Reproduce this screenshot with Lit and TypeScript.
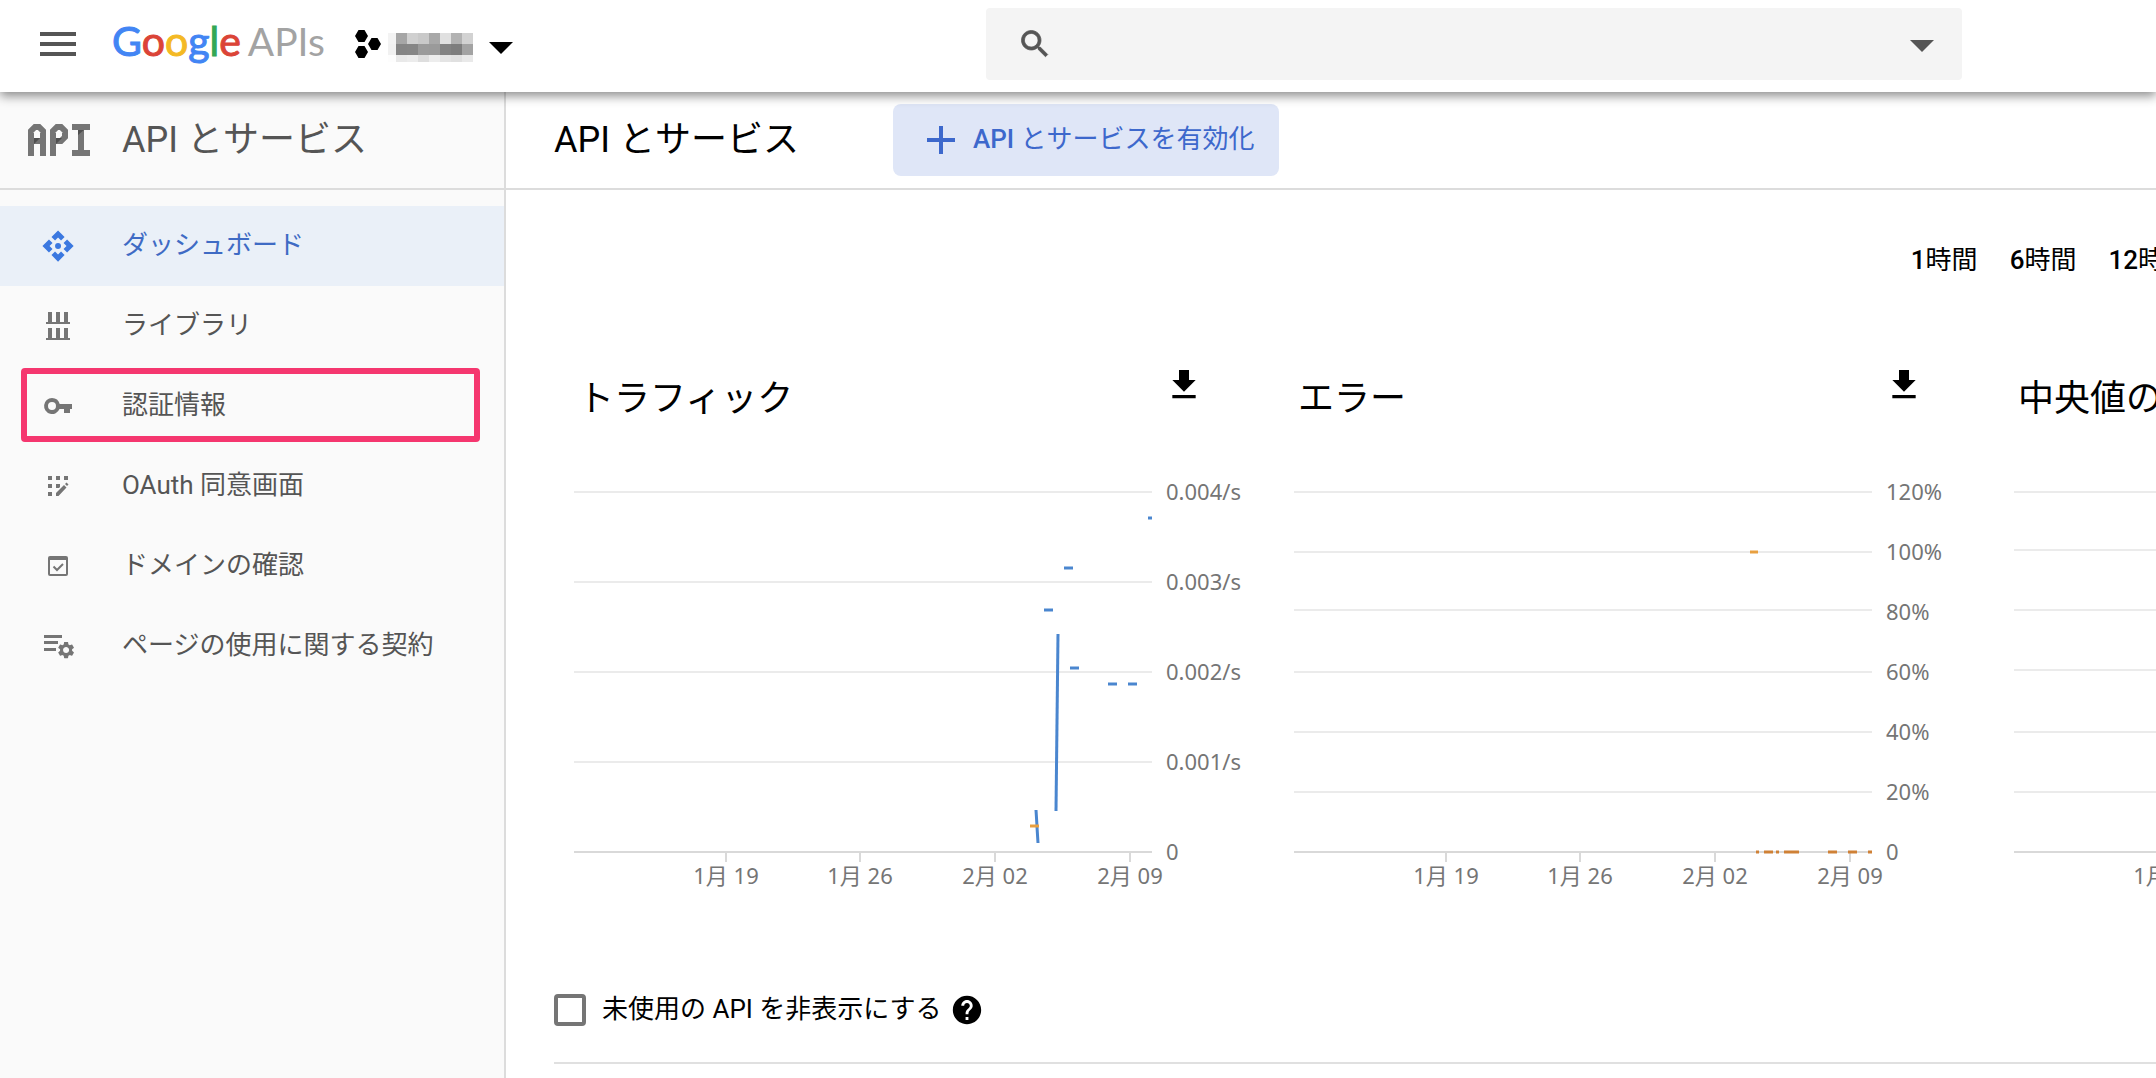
import { LitElement, html, svg, css, nothing, type TemplateResult } from "lit";
import { customElement, property } from "lit/decorators.js";

type Segment = { x1: number; y1: number; x2: number; y2: number; color: string };
type Metric = {
  title: string;
  lines: number[];
  labels: { y: number; text: string }[];
  segments: Segment[];
};

const BLUE = "#4a86cf";
const AMBER = "#e8a040";
const OCHRE = "#cf8136";
const PLOT_WIDTH = 578;
const AXIS_Y = 372;

const dash = (x1: number, x2: number, y: number, color: string): Segment => ({ x1, y1: y, x2, y2: y, color });

const METRICS: Metric[] = [
  {
    title: "トラフィック",
    lines: [12, 102, 192, 282],
    labels: [
      { y: 12, text: "0.004/s" },
      { y: 102, text: "0.003/s" },
      { y: 192, text: "0.002/s" },
      { y: 282, text: "0.001/s" },
      { y: 372, text: "0" },
    ],
    segments: [
      dash(574, 578, 38, BLUE),
      dash(490, 499, 88, BLUE),
      dash(470, 479, 130, BLUE),
      { x1: 484, y1: 154, x2: 482, y2: 331, color: BLUE },
      dash(496, 505, 188, BLUE),
      dash(534, 543, 204, BLUE),
      dash(554, 563, 204, BLUE),
      { x1: 462, y1: 330, x2: 464, y2: 363, color: BLUE },
      dash(456, 465, 346, AMBER),
    ],
  },
  {
    title: "エラー",
    lines: [12, 72, 130, 192, 252, 312],
    labels: [
      { y: 12, text: "120%" },
      { y: 72, text: "100%" },
      { y: 132, text: "80%" },
      { y: 192, text: "60%" },
      { y: 252, text: "40%" },
      { y: 312, text: "20%" },
      { y: 372, text: "0" },
    ],
    segments: [
      dash(456, 464, 72, AMBER),
      dash(462, 465, 372, OCHRE),
      dash(470, 479, 372, OCHRE),
      dash(482, 485, 372, OCHRE),
      dash(490, 505, 372, OCHRE),
      dash(534, 543, 372, OCHRE),
      dash(554, 563, 372, OCHRE),
      dash(574, 578, 372, OCHRE),
    ],
  },
  {
    title: "中央値のレイテンシ",
    lines: [12, 70, 130, 190, 252, 312],
    labels: [],
    segments: [],
  },
];

const DATES = [
  { x: 152, text: "1月 19" },
  { x: 286, text: "1月 26" },
  { x: 421, text: "2月 02" },
  { x: 556, text: "2月 09" },
];

@customElement("metric-chart")
class MetricChart extends LitElement {
  @property({ attribute: false }) metric!: Metric;

  static styles = css`
    :host {
      display: block;
      flex: 0 0 720px;
    }
    .head {
      display: flex;
      align-items: flex-start;
      justify-content: space-between;
      width: 630px;
      height: 115px;
      padding-left: 4px;
      box-sizing: border-box;
    }
    .title {
      margin: 14px 0 0;
      font-size: 36px;
      font-weight: 400;
      line-height: 40px;
      white-space: nowrap;
    }
    .download {
      display: block;
      padding: 0;
      border: 0;
      background: none;
      color: #000;
    }
    .download svg,
    .plot {
      display: block;
    }
    .plot {
      overflow: visible;
    }
    .tick-label {
      font-family: "Noto Sans", "Noto Sans CJK JP", sans-serif;
      font-size: 22px;
      fill: #757575;
    }
    .grid {
      stroke: #ebebeb;
      stroke-width: 2;
    }
    .axis {
      stroke: #d9d9d9;
      stroke-width: 2;
    }
    .series {
      stroke-width: 3;
    }
  `;

  render() {
    const m = this.metric;
    return html`
      <div class="head">
        <h2 class="title">${m.title}</h2>
        <button class="download" type="button" aria-label="${m.title}をダウンロード">
          <svg width="40" height="40" viewBox="0 0 24 24" fill="currentColor" aria-hidden="true">
            <path d="M19 9h-4V3H9v6H5l7 7 7-7zM5 18v2h14v-2H5z" />
          </svg>
        </button>
      </div>
      <svg class="plot" width="700" height="410" viewBox="0 0 700 410" role="img" aria-label=${m.title}>
        ${m.lines.map((y) => svg`<line class="grid" x1="0" x2=${PLOT_WIDTH} y1=${y} y2=${y} />`)}
        <line class="axis" x1="0" x2=${PLOT_WIDTH} y1=${AXIS_Y} y2=${AXIS_Y} />
        ${DATES.map(
          (d) => svg`
            <line class="axis" x1=${d.x} x2=${d.x} y1=${AXIS_Y} y2=${AXIS_Y + 10} />
            <text class="tick-label" x=${d.x} y="404" text-anchor="middle">${d.text}</text>`,
        )}
        ${m.labels.map((l) => svg`<text class="tick-label" x="592" y=${l.y + 8}>${l.text}</text>`)}
        ${m.segments.map(
          (s) => svg`<line class="series" x1=${s.x1} y1=${s.y1} x2=${s.x2} y2=${s.y2} stroke=${s.color} />`,
        )}
      </svg>
    `;
  }
}

const navIcons: Record<string, TemplateResult> = {
  dashboard: svg`<g transform="translate(1 1) scale(1.42)"><path d="M12 6l2.12 2.12 2.5-2.5L12 1 7.38 5.62l2.5 2.5L12 6zm-6 6l2.12-2.12-2.5-2.5L1 12l4.62 4.62 2.5-2.5L6 12zm12 0l-2.12 2.12 2.5 2.5L23 12l-4.62-4.62-2.5 2.5L18 12zm-6 6l-2.12-2.12-2.5 2.5L12 23l4.62-4.62-2.5-2.5L12 18z"/><circle cx="12" cy="12" r="2.1"/></g>`,
  library: svg`<path d="M8 4h4v10h4V4h4v10h4V4h4v10h2v2H6v-2h2zM8 20h4v10h4V20h4v10h4V20h4v10h2v2H6v-2h2z"/>`,
  key: svg`<path fill-rule="evenodd" d="M12 10a8 8 0 0 1 7.7 6H32v5h-2v4h-6v-4h-4.500a8 8 0 1 1-7.500-11zm0 4a4 4 0 1 0 0 8 4 4 0 0 0 0-8z"/>`,
  consent: svg`<path d="M8 8h4v4H8zM16 8h4v4h-4zM24 8h4v4h-4zM8 16h4v4H8zM16 16h4v3l-1 1h-3zM8 24h4v4H8zM16 28v-3l8-8 2.500 2.500L18.500 28zM25 16l1.500-1.500 2 2L27 18z"/>`,
  domain: svg`<path fill-rule="evenodd" d="M10 8h16a2 2 0 0 1 2 2v16a2 2 0 0 1-2 2H10a2 2 0 0 1-2-2V10a2 2 0 0 1 2-2zm0 4v14h16V12z"/><path d="M13.500 18.500l3.500 3.500 6-6" fill="none" stroke="currentColor" stroke-width="2"/>`,
  terms: svg`<path d="M4 7h18v3H4zM4 13h14v3H4zM4 20h12v3H4z"/><g transform="translate(16 12) scale(.84)"><path d="M19.140 12.940c.04-.3.06-.61.06-.94 0-.32-.02-.64-.07-.94l2.030-1.580c.18-.14.23-.41.12-.61l-1.920-3.320c-.12-.22-.37-.29-.59-.22l-2.390.96c-.5-.38-1.030-.7-1.620-.94l-.36-2.540c-.04-.24-.24-.41-.48-.41h-3.840c-.24 0-.43.17-.47.41l-.36 2.540c-.59.24-1.130.57-1.620.94l-2.390-.96c-.22-.08-.47 0-.59.22L2.740 8.870c-.12.21-.08.47.12.61l2.030 1.580c-.05.3-.09.63-.09.94s.02.64.07.94l-2.030 1.580c-.18.14-.23.41-.12.61l1.920 3.320c.12.22.37.29.59.22l2.390-.96c.5.38 1.030.7 1.620.94l.36 2.540c.05.24.24.41.48.41h3.840c.24 0 .44-.17.47-.41l.36-2.540c.59-.24 1.130-.56 1.620-.94l2.390.96c.22.08.47 0 .59-.22l1.920-3.320c.12-.22.07-.47-.12-.61l-2.010-1.580zM12 15.600c-1.980 0-3.600-1.620-3.600-3.600s1.620-3.600 3.600-3.600 3.600 1.620 3.600 3.600-1.620 3.600-3.600 3.600z"/></g>`,
};

const NAV = [
  { icon: "dashboard", label: "ダッシュボード", current: true },
  { icon: "library", label: "ライブラリ" },
  { icon: "key", label: "認証情報", marked: true },
  { icon: "consent", label: "OAuth 同意画面" },
  { icon: "domain", label: "ドメインの確認" },
  { icon: "terms", label: "ページの使用に関する契約" },
];

const RANGES = ["1", "6", "12"];

const LOGO = [
  ["G", "#4285f4"],
  ["o", "#db4437"],
  ["o", "#f4b924"],
  ["g", "#4285f4"],
  ["l", "#34a853"],
  ["e", "#db4437"],
];

/* Grey levels of the obscured project name, one row per line of blocks. */
const MOSAIC = [
  { height: 11, cells: ["#f3f3f3", "#a6a6a6", "#d0d0d0", "#c9c9c9", "#a8a8a8", "#e0e0e0", "#b2b2b2", "#d2d2d2"] },
  { height: 11, cells: ["#f1f1f1", "#858585", "#868686", "#9b9b9b", "#9a9a9a", "#828282", "#7d7d7d", "#a3a3a3"] },
  { height: 7, cells: ["#fdfdfd", "#e9e9e9", "#ececec", "#dedede", "#ededed", "#e4e4e4", "#e0e0e0", "#e9e9e9"] },
];

@customElement("app-root")
class AppRoot extends LitElement {
  static styles = css`
    :host {
      display: flex;
      flex-direction: column;
      min-height: 100vh;
      overflow: hidden;
      background: #fff;
      color: #000;
      font-family: Roboto, "Noto Sans CJK JP", sans-serif;
      font-size: 26px;
    }
    button,
    input {
      font: inherit;
      color: inherit;
    }
    button {
      padding: 0;
      border: 0;
      background: none;
    }
    svg {
      display: block;
      flex: none;
    }
    .topbar {
      position: relative;
      z-index: 1;
      display: flex;
      align-items: flex-start;
      height: 92px;
      padding-right: 194px;
      box-sizing: border-box;
      background: #fff;
      box-shadow: 0 4px 10px rgba(0, 0, 0, 0.45);
    }
    .brand {
      display: flex;
      align-items: center;
      flex: 0 0 986px;
      height: 88px;
      padding-left: 34px;
      box-sizing: border-box;
    }
    .menu {
      color: #555;
    }
    .logo {
      display: flex;
      align-items: baseline;
      gap: 7px;
      margin-left: 30px;
      padding-bottom: 6px;
      font-family: Lato, sans-serif;
      font-size: 41px;
      line-height: 48px;
      color: #a3a3a3;
      text-decoration: none;
    }
    .google {
      -webkit-text-stroke: 1px currentColor;
    }
    .product {
      font-size: 39px;
    }
    .project {
      display: flex;
      align-items: center;
      margin-left: 30px;
    }
    .mosaic {
      display: block;
      margin: 6px 16px 0 7px;
    }
    .mosaic-row {
      display: grid;
      grid-template-columns: 8px repeat(7, 11px);
    }
    .caret {
      margin-top: 8px;
    }
    .search {
      display: flex;
      align-items: center;
      flex: 1;
      height: 72px;
      margin-top: 8px;
      padding: 0 28px 0 31px;
      box-sizing: border-box;
      border-radius: 4px;
      background: #f4f4f4;
      color: #555;
    }
    .search-input {
      flex: 1;
      min-width: 0;
      height: 48px;
      padding: 0 16px;
      border: 0;
      outline: 0;
      background: none;
    }
    .suggest {
      padding-top: 4px;
    }
    .body {
      display: flex;
      flex: 1;
    }
    .sidebar {
      flex: 0 0 504px;
      border-right: 2px solid #dcdcdc;
      background: #fafafa;
      color: #555;
    }
    .section {
      display: flex;
      align-items: center;
      height: 96px;
      padding-left: 28px;
      border-bottom: 2px solid #dcdcdc;
    }
    .section-name {
      margin-left: 32px;
      font-size: 36px;
      line-height: 48px;
    }
    .nav {
      margin: 0;
      padding: 16px 0 0;
      list-style: none;
    }
    .nav-item {
      position: relative;
    }
    .nav-link {
      display: flex;
      align-items: center;
      gap: 46px;
      height: 80px;
      padding-left: 40px;
      color: #555;
      text-decoration: none;
      white-space: nowrap;
    }
    .nav-link svg {
      color: #757575;
    }
    .nav-text {
      padding-bottom: 2px;
      line-height: 40px;
    }
    .nav-link.current {
      background: #eaf0f8;
      color: #3f6bc4;
    }
    .nav-link.current svg {
      color: #3b78e0;
    }
    .marker {
      position: absolute;
      inset: 2px 24px 4px 21px;
      border: 6px solid #f5376f;
      border-radius: 4px;
      pointer-events: none;
    }
    .main {
      flex: 1;
      min-width: 0;
      overflow: hidden;
    }
    .page-head {
      display: flex;
      align-items: center;
      gap: 94px;
      height: 96px;
      padding-left: 48px;
      border-bottom: 2px solid #dcdcdc;
    }
    .page-title {
      margin: 0;
      font-size: 36px;
      font-weight: 400;
      line-height: 48px;
      white-space: nowrap;
    }
    .enable {
      display: flex;
      align-items: center;
      gap: 18px;
      height: 72px;
      padding: 0 24px 0 34px;
      border-radius: 8px;
      background: #dfe6f7;
      color: #3d68cc;
      white-space: nowrap;
    }
    .enable-text {
      padding-bottom: 2px;
      line-height: 40px;
    }
    .strong {
      font-weight: 500;
    }
    .ranges {
      display: flex;
      justify-content: flex-end;
      gap: 32px;
      margin-right: -34px;
      padding-top: 50px;
      white-space: nowrap;
    }
    .range {
      line-height: 40px;
    }
    .charts {
      display: flex;
      margin-top: 85px;
      padding-left: 68px;
    }
    .filter {
      display: flex;
      align-items: center;
      height: 32px;
      margin: 104px 0 0 48px;
      padding-bottom: 36px;
      border-bottom: 2px solid #e0e0e0;
    }
    .check {
      appearance: none;
      width: 32px;
      height: 32px;
      margin: 0 16px 0 0;
      border: 4px solid #757575;
      border-radius: 4px;
      background: #fff;
    }
    .filter-label {
      padding-bottom: 2px;
      line-height: 40px;
    }
    .help {
      margin-left: 8px;
    }
  `;

  render() {
    return html`
      <header class="topbar">
        <div class="brand">
          <button class="menu" type="button" aria-label="メニュー">
            <svg width="48" height="48" viewBox="0 0 24 24" fill="currentColor" aria-hidden="true">
              <path d="M3 18h18v-2H3v2zm0-5h18v-2H3v2zm0-7v2h18V6H3z" />
            </svg>
          </button>
          <a class="logo" href="#">
            <span class="google">${LOGO.map(([ch, color]) => html`<span style="color:${color}">${ch}</span>`)}</span>
            <span class="product">APIs</span>
          </a>
          <button class="project" type="button" aria-label="プロジェクトを選択">
            <svg width="26" height="28" viewBox="0 0 26 28" aria-hidden="true">
              <path
                d="M0 6l3.500-6h6l3.500 6-3.500 6h-6zM0 22l3.500-6h6l3.500 6-3.500 6h-6zM13 14l3.500-6h6l3.500 6-3.500 6h-6z"
              />
            </svg>
            <span class="mosaic">
              ${MOSAIC.map(
                (row) =>
                  html`<span class="mosaic-row"
                    >${row.cells.map((c) => html`<span style="height:${row.height}px;background:${c}"></span>`)}</span
                  >`,
              )}
            </span>
            <svg class="caret" width="24" height="12" viewBox="0 0 24 12" aria-hidden="true">
              <path d="M0 0h24L12 12z" />
            </svg>
          </button>
        </div>
        <div class="search">
          <svg
            width="36"
            height="36"
            viewBox="0 0 24 24"
            fill="currentColor"
            stroke="currentColor"
            stroke-width=".5"
            aria-hidden="true"
          >
            <path
              d="M15.500 14h-.79l-.28-.27C15.410 12.590 16 11.110 16 9.500 16 5.910 13.090 3 9.500 3S3 5.910 3 9.500 5.910 16 9.500 16c1.610 0 3.090-.59 4.230-1.570l.27.28v.79l5 4.990L20.490 19l-4.990-5zm-6 0C7.010 14 5 11.990 5 9.500S7.010 5 9.500 5 14 7.010 14 9.500 11.990 14 9.500 14z"
            />
          </svg>
          <input class="search-input" type="text" aria-label="検索" />
          <button class="suggest" type="button" aria-label="検索候補">
            <svg width="24" height="12" viewBox="0 0 24 12" fill="currentColor" aria-hidden="true">
              <path d="M0 0h24L12 12z" />
            </svg>
          </button>
        </div>
      </header>
      <div class="body">
        <aside class="sidebar">
          <div class="section">
            <svg width="62" height="32" viewBox="0 0 62 32" fill="none" stroke="#757575" stroke-width="6" aria-hidden="true">
              <path d="M3 32V7l4-4h4l4 4v25M3 17h12M25 32V7l4-4h4l4 4v6l-4 4h-8M44 3h18M44 29h18M53 3v26" />
              <path d="M6 14h6l-6 6zM28 14h6l-6 6zM50 6h6l-6 5z" fill="#4f4f4f" stroke="none" />
            </svg>
            <span class="section-name">API とサービス</span>
          </div>
          <nav>
            <ul class="nav">
              ${NAV.map(
                (item) => html`
                  <li class="nav-item">
                    <a
                      class="nav-link ${item.current ? "current" : ""}"
                      href="#"
                      aria-current=${item.current ? "page" : nothing}
                    >
                      <svg width="36" height="36" viewBox="0 0 36 36" fill="currentColor" aria-hidden="true">
                        ${navIcons[item.icon]}
                      </svg>
                      <span class="nav-text">${item.label}</span>
                    </a>
                    ${item.marked ? html`<span class="marker"></span>` : nothing}
                  </li>
                `,
              )}
            </ul>
          </nav>
        </aside>
        <main class="main">
          <div class="page-head">
            <h1 class="page-title">API とサービス</h1>
            <button class="enable" type="button">
              <svg width="28" height="28" viewBox="0 0 28 28" fill="currentColor" aria-hidden="true">
                <path d="M12 0h4v12h12v4H16v12h-4V16H0v-4h12z" />
              </svg>
              <span class="enable-text"><span class="strong">API</span> とサービスを有効化</span>
            </button>
          </div>
          <div class="ranges">
            ${RANGES.map(
              (hours) => html`<button class="range" type="button"><span class="strong">${hours}</span>時間</button>`,
            )}
          </div>
          <div class="charts">${METRICS.map((m) => html`<metric-chart .metric=${m}></metric-chart>`)}</div>
          <div class="filter">
            <input class="check" id="hide-unused" type="checkbox" />
            <label class="filter-label" for="hide-unused">未使用の API を非表示にする</label>
            <button class="help" type="button" aria-label="ヘルプ">
              <svg width="34" height="34" viewBox="0 0 24 24" aria-hidden="true">
                <path
                  d="M12 2C6.480 2 2 6.480 2 12s4.480 10 10 10 10-4.480 10-10S17.520 2 12 2zm1 17h-2v-2h2v2zm2.070-7.750l-.9.920C13.450 12.900 13 13.500 13 15h-2v-.5c0-1.100.45-2.100 1.170-2.830l1.240-1.260c.37-.36.59-.86.59-1.410 0-1.100-.9-2-2-2s-2 .9-2 2H8c0-2.210 1.790-4 4-4s4 1.790 4 4c0 .88-.36 1.680-.93 2.250z"
                />
              </svg>
            </button>
          </div>
        </main>
      </div>
    `;
  }
}
